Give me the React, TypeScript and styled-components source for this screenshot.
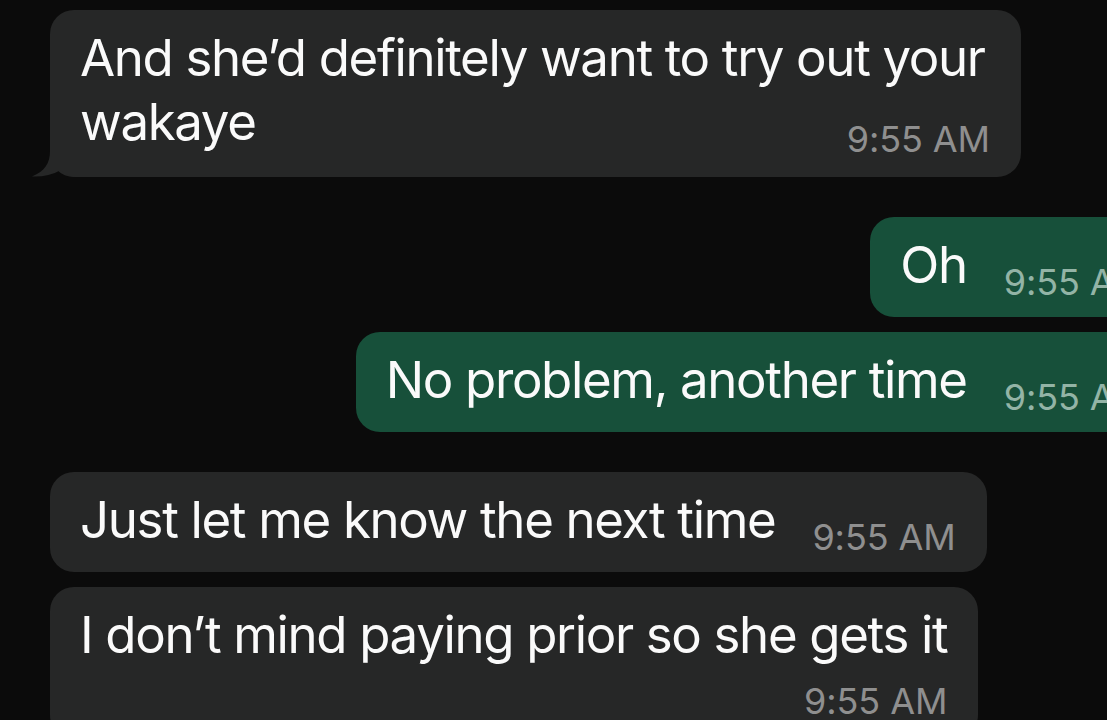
import React from 'react';
import styled, { createGlobalStyle } from 'styled-components';

type Side = 'in' | 'out';

interface Message {
  id: number;
  side: Side;
  text: string;
  time: string;
  tail?: boolean;
  stacked?: boolean;
  groupStart?: boolean;
}

const messages: Message[] = [
  {
    id: 1,
    side: 'in',
    text: 'And she\u2019d definitely want to try out your wakaye',
    time: '9:55 AM',
    tail: true,
  },
  { id: 2, side: 'out', text: 'Oh', time: '9:55 AM', groupStart: true },
  { id: 3, side: 'out', text: 'No problem, another time', time: '9:55 AM' },
  {
    id: 4,
    side: 'in',
    text: 'Just let me know the next time',
    time: '9:55 AM',
    groupStart: true,
  },
  {
    id: 5,
    side: 'in',
    text: 'I don\u2019t mind paying prior so she gets it',
    time: '9:55 AM',
    stacked: true,
  },
];

const GlobalStyle = createGlobalStyle`
  html, body {
    margin: 0;
    padding: 0;
    background: #0b0b0b;
  }
  body {
    font-family: Inter, "Noto Sans", "Liberation Sans", sans-serif;
    -webkit-font-smoothing: antialiased;
  }
`;

const App: React.FC = () => {
  return (
    <>
      <GlobalStyle />
      <Screen>
        <Thread>
          {messages.map(msg => (
            <Row key={msg.id} side={msg.side} groupStart={!!msg.groupStart}>
              <Bubble side={msg.side} stacked={!!msg.stacked} tail={!!msg.tail}>
                <Text>{msg.text}</Text>
                <Time side={msg.side} stacked={!!msg.stacked}>
                  {msg.time}
                </Time>
                {msg.tail && (
                  <Tail viewBox="0 0 44 46" aria-hidden>
                    <path
                      d="M18 0 L18 20 C18 32 13 40 0 45.5 C10 46 20 44 29 39 C33 43 38 46 44 46 L44 0 Z"
                      fill="#262727"
                    />
                  </Tail>
                )}
              </Bubble>
            </Row>
          ))}
        </Thread>
      </Screen>
    </>
  );
};

const Screen = styled.div`
  width: 1107px;
  height: 720px;
  overflow: hidden;
  background: #0b0b0b;
`;

const Thread = styled.div`
  width: 1178px;
  padding: 10px 0 0 50px;
  box-sizing: border-box;
  display: flex;
  flex-direction: column;
`;

const Row = styled.div<{ side: Side; groupStart: boolean }>`
  display: flex;
  justify-content: ${({ side }) => (side === 'out' ? 'flex-end' : 'flex-start')};
  margin-top: ${({ groupStart }) => (groupStart ? '40px' : '15px')};

  &:first-child {
    margin-top: 0;
  }
`;

const Bubble = styled.div<{ side: Side; stacked: boolean; tail: boolean }>`
  position: relative;
  display: ${({ stacked }) => (stacked ? 'flex' : 'block')};
  flex-direction: column;
  max-width: 910px;
  padding: 16px 31px ${({ tail }) => (tail ? '23px' : '20px')} 30px;
  border-radius: 24px;
  background: ${({ side }) => (side === 'out' ? '#17503a' : '#262727')};
  color: #fafafa;
  font-size: 51px;
  line-height: 64px;
`;

const Text = styled.span`
  letter-spacing: -1.35px;
`;

const Time = styled.span<{ side: Side; stacked: boolean }>`
  float: ${({ stacked }) => (stacked ? 'none' : 'right')};
  align-self: flex-end;
  margin: ${({ stacked }) => (stacked ? '16px 0 0 0' : '31px 0 -3px 37px')};
  font-size: 36px;
  line-height: 36px;
  letter-spacing: -0.1px;
  color: ${({ side }) => (side === 'out' ? '#93b4a6' : '#8f8f8f')};
`;

const Tail = styled.svg`
  position: absolute;
  left: -18px;
  bottom: 0;
  width: 44px;
  height: 46px;
`;

export default App;
